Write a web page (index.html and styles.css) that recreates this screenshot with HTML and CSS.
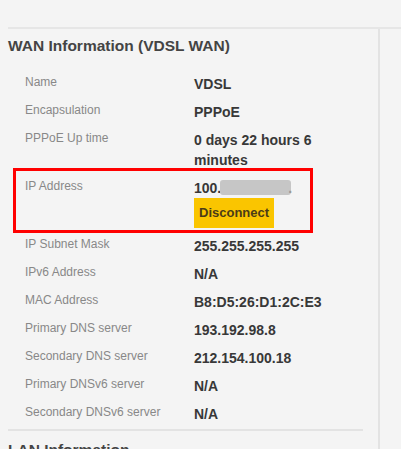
FILE: index.html
```html
<!DOCTYPE html>
<html>
<head>
<meta charset="utf-8">
<link rel="stylesheet" href="styles.css">
</head>
<body>
<div class="topbar"></div>
<div class="panel">
  <div class="main">
    <section class="info wan">
      <h2 class="title">WAN Information (VDSL WAN)</h2>
      <dl class="rows">
        <div class="row"><dt>Name</dt><dd>VDSL</dd></div>
        <div class="row"><dt>Encapsulation</dt><dd>PPPoE</dd></div>
        <div class="row"><dt>PPPoE Up time</dt><dd>0 days 22 hours 6<br>minutes</dd></div>
        <div class="row highlight">
          <dt>IP Address</dt>
          <dd>100.<span class="redacted"></span><span class="dot">.</span><br><button class="btn" type="button">Disconnect</button></dd>
          <div class="mark"></div>
        </div>
        <div class="row"><dt>IP Subnet Mask</dt><dd>255.255.255.255</dd></div>
        <div class="row"><dt>IPv6 Address</dt><dd>N/A</dd></div>
        <div class="row"><dt>MAC Address</dt><dd>B8:D5:26:D1:2C:E3</dd></div>
        <div class="row"><dt>Primary DNS server</dt><dd>193.192.98.8</dd></div>
        <div class="row"><dt>Secondary DNS server</dt><dd>212.154.100.18</dd></div>
        <div class="row"><dt>Primary DNSv6 server</dt><dd>N/A</dd></div>
        <div class="row"><dt>Secondary DNSv6 server</dt><dd>N/A</dd></div>
      </dl>
    </section>
    <section class="info lan">
      <h2 class="title">LAN Information</h2>
    </section>
  </div>
  <div class="side"></div>
</div>
</body>
</html>
```
FILE: styles.css
```css
html, body {
  margin: 0;
  padding: 0;
  height: 449px;
  overflow: hidden;
  background: #f4f4f4;
  font-family: "Liberation Sans", Arial, sans-serif;
}
.topbar {
  height: 27px;
}
.panel {
  margin-left: 8px;
  border-top: 2px solid #e6e6e6;
  display: flex;
  height: 420px;
}
.main {
  width: 370px;
  border-right: 2px solid #e3e3e3;
}
.info {
  width: 355px;
}
.wan {
  border-bottom: 2px solid #e3e3e3;
  padding-bottom: 0;
}
.title {
  margin: 7px 0 0;
  font-size: 15.5px;
  line-height: 20px;
  font-weight: bold;
  color: #444444;
}
.lan .title {
  margin-top: 9px;
}
.rows {
  margin: 18px 0 0;
  padding-left: 17px;
}
.row {
  display: grid;
  grid-template-columns: 169px 1fr;
  padding-bottom: 8px;
}
.row:last-child {
  padding-bottom: 5px;
}
.row dt {
  font-size: 12px;
  line-height: 16px;
  color: #888888;
}
.row dd {
  margin: 0;
  font-size: 14px;
  line-height: 20px;
  font-weight: bold;
  color: #383838;
}
.highlight {
  position: relative;
}
.mark {
  position: absolute;
  top: -10px;
  left: -12px;
  width: 300px;
  height: 65px;
  box-sizing: border-box;
  border: 3px solid #ff0000;
}
.redacted {
  display: inline-block;
  width: 71px;
  height: 15px;
  margin-left: -1px;
  vertical-align: -2px;
  background: #c6c6c6;
  border-radius: 3px;
}
.dot {
  margin-left: -3px;
  color: #9a9a9a;
}
.btn {
  display: inline-block;
  height: 30px;
  margin: 0;
  padding: 0 5px;
  border: none;
  background: #fac500;
  font-family: "Liberation Sans", Arial, sans-serif;
  font-size: 13px;
  font-weight: bold;
  line-height: 30px;
  color: #4a3c18;
  vertical-align: top;
}
.side {
  flex: 1;
}
```
